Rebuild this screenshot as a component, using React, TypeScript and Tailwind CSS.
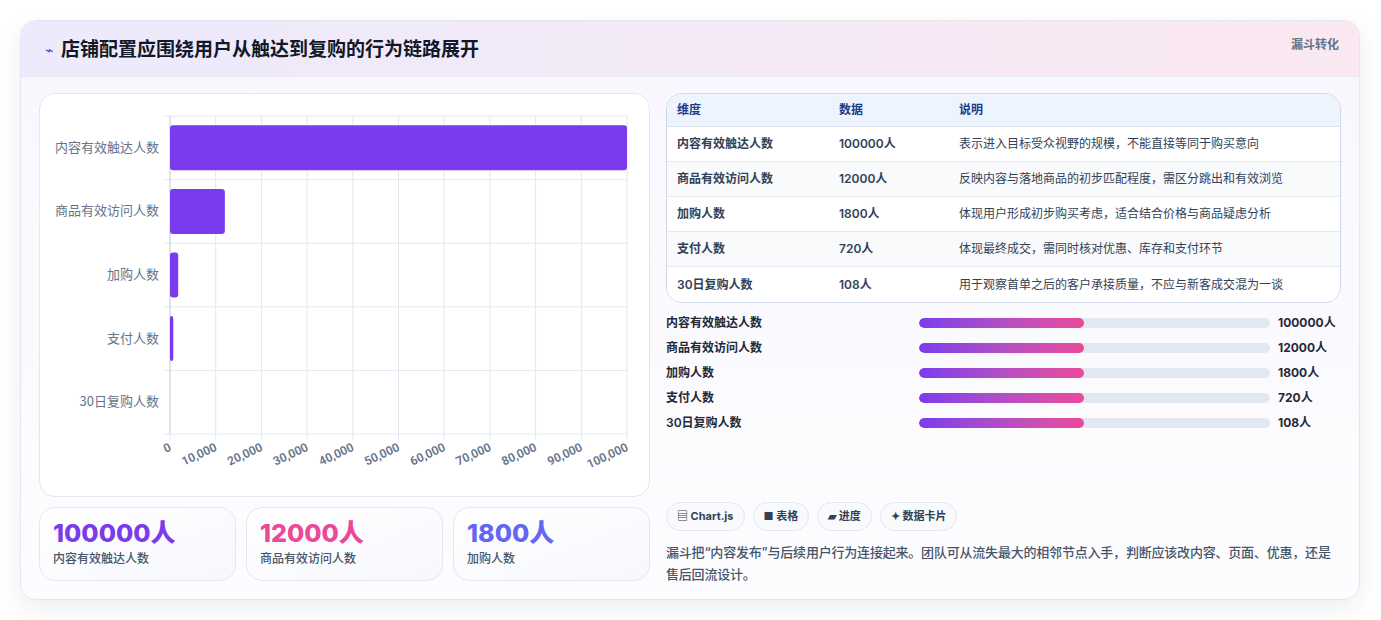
import React from "react";

const rows = [
  ["内容有效触达人数", "100000人", "表示进入目标受众视野的规模，不能直接等同于购买意向", 100000],
  ["商品有效访问人数", "12000人", "反映内容与落地商品的初步匹配程度，需区分跳出和有效浏览", 12000],
  ["加购人数", "1800人", "体现用户形成初步购买考虑，适合结合价格与商品疑虑分析", 1800],
  ["支付人数", "720人", "体现最终成交，需同时核对优惠、库存和支付环节", 720],
  ["30日复购人数", "108人", "用于观察首单之后的客户承接质量，不应与新客成交混为一谈", 108],
] as const;

function Chart() {
  const x0 = 130, x1 = 587, y0 = 22, y1 = 340;
  const rh = (y1 - y0) / 5;
  const ticks = [0, 10000, 20000, 30000, 40000, 50000, 60000, 70000, 80000, 90000, 100000];
  return (
    <svg width="610" height="403" viewBox="0 0 610 403" style={{ fontFamily: "Roboto, 'Noto Sans CJK SC', sans-serif" }}>
      {ticks.map((t, i) => {
        const x = x0 + ((x1 - x0) * i) / 10;
        return <line key={t} x1={x} x2={x} y1={y0} y2={y1 + 6} stroke="#e2e8f0" strokeWidth="1" />;
      })}
      {[0, 1, 2, 3, 4, 5].map((i) => (
        <line key={i} x1={x0 - 6} x2={x1} y1={y0 + rh * i} y2={y0 + rh * i} stroke="#e2e8f0" strokeWidth="1" />
      ))}
      <line x1={x0} x2={x0} y1={y0} y2={y1} stroke="#cbd5e1" />
      {rows.map((r, i) => {
        const w = ((x1 - x0) * (r[3] as number)) / 100000;
        const cy = y0 + rh * i + rh / 2;
        return (
          <g key={i}>
            {w > 1 && <rect x={x0} y={cy - 22.5} width={w} height={45} rx={3} fill="#7c3aed" />}
            <text x={x0 - 11} y={cy + 4} textAnchor="end" fontSize="13" fill="#64748b" fontFamily="'Noto Sans CJK SC', sans-serif">{r[0]}</text>
          </g>
        );
      })}
      {ticks.map((t, i) => {
        const x = x0 + ((x1 - x0) * i) / 10;
        return (
          <text key={t} x={x + 2} y={y1 + 16} textAnchor="end" fontSize="12" fontWeight="600" fill="#64748b" transform={`rotate(-25 ${x + 2} ${y1 + 16})`}>
            {t.toLocaleString("en-US")}
          </text>
        );
      })}
    </svg>
  );
}

export default function App() {
  return (
    <div className="w-[1381px] h-[620px] bg-white pt-5 px-5" style={{ fontFamily: "Inter, 'Noto Sans CJK SC', sans-serif" }}>
      <div className="w-[1340px] h-[580px] rounded-2xl border border-[#e5e7f0] shadow-[0_8px_24px_rgba(30,41,59,0.08)] overflow-hidden bg-gradient-to-b from-[#f8f7fe] to-[#fdfdff]">
        <div className="h-[56px] flex items-start justify-between pl-[24px] pr-5 bg-gradient-to-r from-[#eceafc] to-[#fbe8f1] border-b border-[#ebe8f5]">
          <div className="flex items-center gap-[8px] mt-[15px]">
            <span className="text-[#4f46e5] text-sm">⌁</span>
            <span className="text-[19px] font-bold text-[#111827]">店铺配置应围绕用户从触达到复购的行为链路展开</span>
          </div>
          <span className="text-xs font-bold text-[#64748b] mt-[16px]">漏斗转化</span>
        </div>
        <div className="flex gap-4 pl-[18px] pr-[18px] pt-4">
          <div className="w-[611px] flex flex-col gap-[10px]">
            <div className="h-[404px] bg-white rounded-2xl border border-[#e2e8f0]">
              <Chart />
            </div>
            <div className="grid grid-cols-3 gap-[10px]">
              {[
                ["100000人", "内容有效触达人数", "text-[#7c3aed]"],
                ["12000人", "商品有效访问人数", "text-[#ec4899]"],
                ["1800人", "加购人数", "text-[#6366f1]"],
              ].map(([v, l, c]) => (
                <div key={l} className="h-[74px] rounded-2xl border border-[#e2e8f0] bg-gradient-to-br from-white to-[#f7f8fe] px-[13px] pt-[10px]">
                  <div className={`text-[25px] leading-[30px] font-extrabold ${c}`}>{v}</div>
                  <div className="text-xs text-[#475569] mt-[3px] font-medium">{l}</div>
                </div>
              ))}
            </div>
          </div>
          <div className="flex-1 flex flex-col">
            <div className="rounded-2xl border border-[#cfd8e6] overflow-hidden bg-white">
              <div className="h-[33px] flex items-center bg-[#edf4fd] text-xs font-bold text-[#1e3a8a] border-b border-[#d9e1ec]">
                <span className="w-[172px] pl-[10px]">维度</span>
                <span className="w-[120px]">数据</span>
                <span>说明</span>
              </div>
              {rows.map((r, i) => (
                <div key={i} className={`h-[35px] flex items-center text-xs text-[#334155] ${i < 4 ? "border-b border-[#e5eaf1]" : ""} ${i % 2 ? "bg-[#f8fafc]" : "bg-white"}`}>
                  <span className="w-[172px] pl-[10px] font-semibold">{r[0]}</span>
                  <span className="w-[120px] font-semibold">{r[1]}</span>
                  <span>{r[2]}</span>
                </div>
              ))}
            </div>
            <div className="flex flex-col mt-[12px] gap-[9px]">
              {rows.map((r, i) => (
                <div key={i} className="h-4 flex items-center text-xs text-[#1f2937]">
                  <span className="w-[253px] font-semibold">{r[0]}</span>
                  <div className="w-[351px] h-[10px] rounded-full bg-[#e2e8f0] overflow-hidden">
                    <div className="w-[47%] h-full rounded-full bg-gradient-to-r from-[#7c3aed] to-[#ec4899]" />
                  </div>
                  <span className="ml-2 font-bold">{r[1]}</span>
                </div>
              ))}
            </div>
            <div className="flex gap-2 mt-[71px]">
              {["▤ Chart.js", "■ 表格", "▰ 进度", "✦ 数据卡片"].map((t) => (
                <span key={t} className="h-[29px] px-[10px] flex items-center rounded-full border border-[#e2e8f0] bg-[#f8fafc] text-[11px] font-bold text-[#334155]">{t}</span>
              ))}
            </div>
            <p className="mt-[10px] text-[13px] leading-[22px] text-[#475569] font-medium tracking-[-0.2px]">
              漏斗把“内容发布”与后续用户行为连接起来。团队可从流失最大的相邻节点入手，判断应该改内容、页面、优惠，还是售后回流设计。
            </p>
          </div>
        </div>
      </div>
    </div>
  );
}
